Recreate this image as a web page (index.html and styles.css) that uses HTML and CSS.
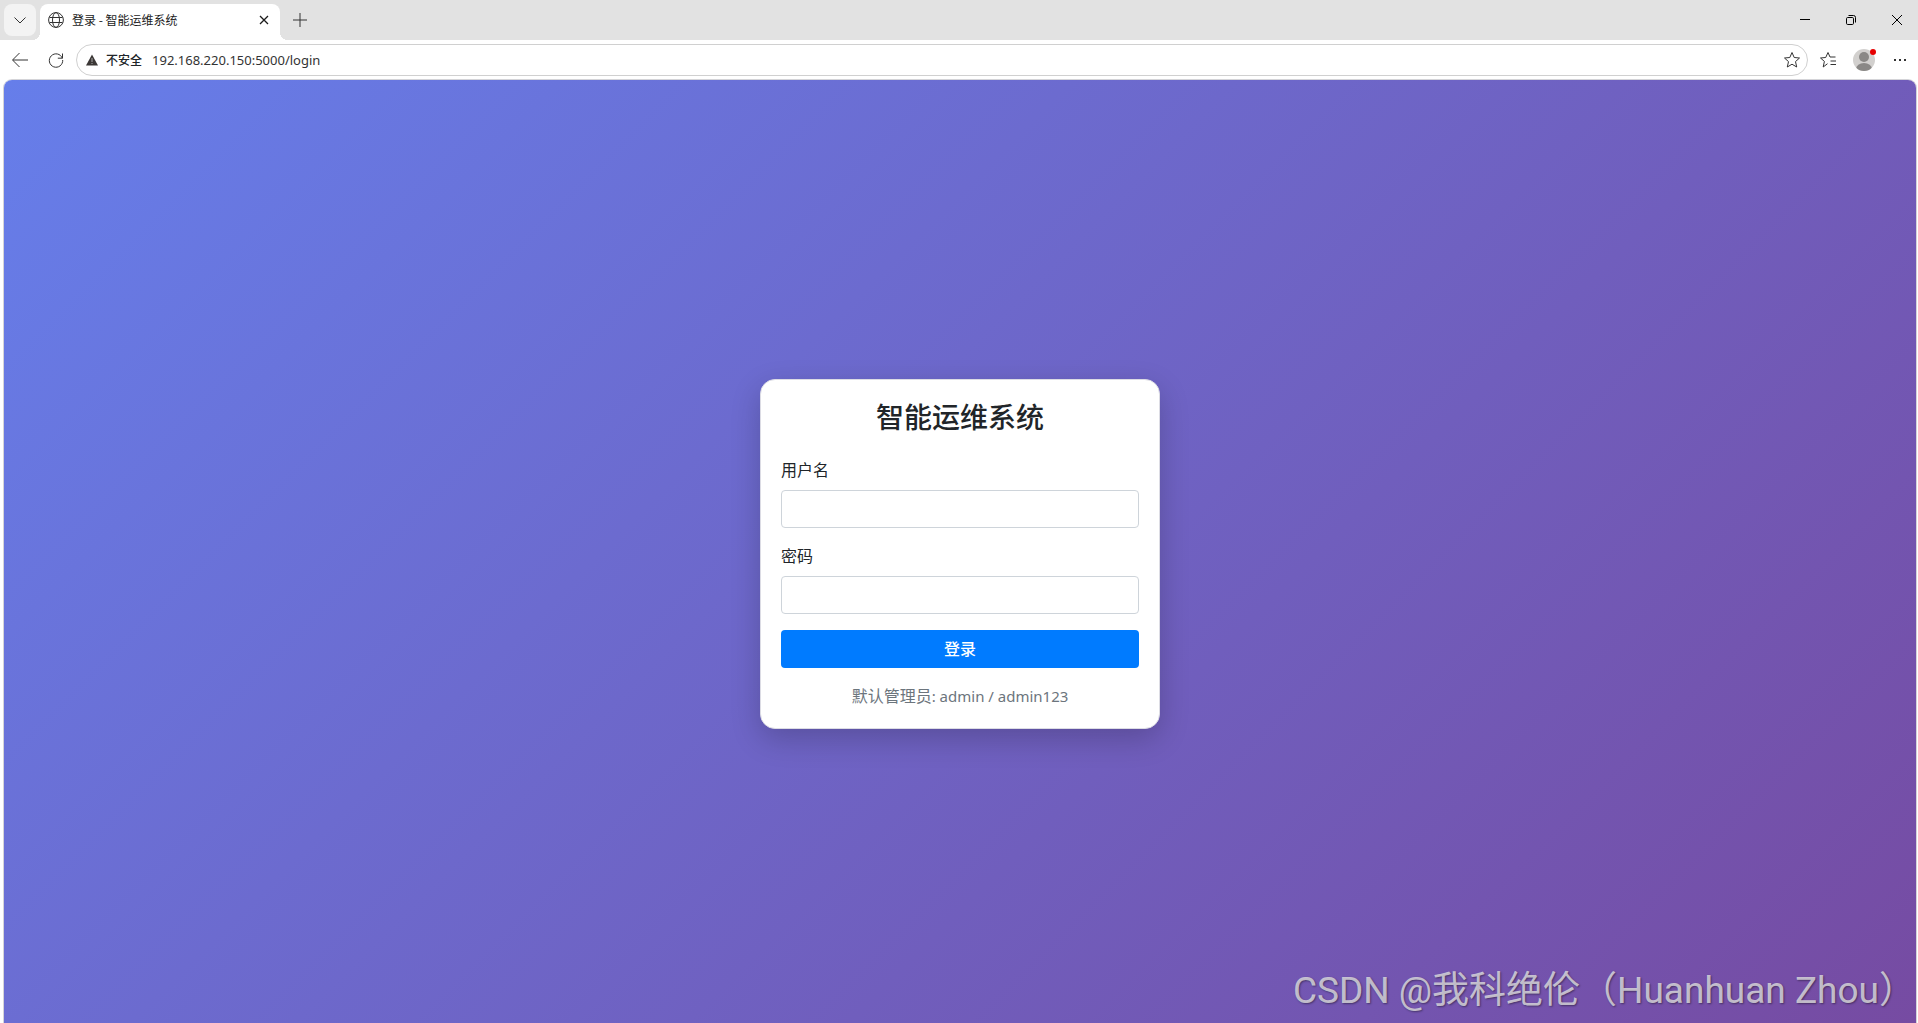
FILE: index.html
```html
<!DOCTYPE html>
<html lang="zh-CN">
<head>
<meta charset="utf-8">
<title>登录 - 智能运维系统</title>
<link rel="stylesheet" href="styles.css">
</head>
<body>
<div class="browser">
  <header class="tabbar">
    <button class="tab-menu" type="button" aria-label="标签页操作"><svg width="14" height="14" viewBox="0 0 14 14"><path d="M1.500 4.500l5.500 5.500 5.500-5.500"/></svg></button>
    <div class="tab">
      <svg class="globe" width="16" height="16" viewBox="0 0 16 16"><circle cx="8" cy="8" r="7.400"/><ellipse cx="8" cy="8" rx="3.500" ry="7.400"/><path d="M1.500 5.500h13M1.500 10.500h13"/></svg>
      <span class="tab-title">登录 - 智能运维系统</span>
      <button class="tab-close" type="button" aria-label="关闭标签页"><svg width="10" height="10" viewBox="0 0 10 10"><path d="M1 1l8 8M9 1l-8 8"/></svg></button>
    </div>
    <button class="new-tab" type="button" aria-label="新建标签页"><svg width="16" height="16" viewBox="0 0 16 16"><path d="M8 1v14M1 8h14"/></svg></button>
    <div class="window-buttons">
      <button type="button" aria-label="最小化"><svg width="12" height="12" viewBox="0 0 12 12"><path d="M1 5.500h10"/></svg></button>
      <button type="button" aria-label="还原"><svg width="12" height="12" viewBox="0 0 12 12"><rect x="1.500" y="3.500" width="7" height="7" rx="1.200"/><path d="M3.500 1.500h5a2 2 0 0 1 2 2v5"/></svg></button>
      <button type="button" aria-label="关闭"><svg width="12" height="12" viewBox="0 0 12 12"><path d="M1 1l10 10M11 1L1 11"/></svg></button>
    </div>
  </header>
  <nav class="toolbar" aria-label="导航">
    <button class="tool" type="button" aria-label="后退"><svg width="18" height="16" viewBox="0 0 18 16"><path d="M17 8H2M8.500 1L1.500 8l7 7"/></svg></button>
    <button class="tool" type="button" aria-label="刷新"><svg width="16" height="16" viewBox="0 0 16 16"><path d="M14.300 6.200A6.700 6.700 0 1 0 14.700 8M14.500 1.500v4.700H9.800"/></svg></button>
    <div class="address">
      <svg class="warning" width="14" height="14" viewBox="0 0 14 14"><path class="solid" d="M7 1.500L13 12.500H1z"/><path class="mark" d="M7 5v4M7 10v1"/></svg>
      <span class="insecure">不安全</span>
      <input class="url" type="text" aria-label="地址" value="192.168.220.150:5000/login">
      <button class="star" type="button" aria-label="收藏"><svg width="18" height="18" viewBox="0 0 18 18"><path d="M9 1.500l2.200 5 5.300.500-4 3.600 1.200 5.400L9 13.200 4.300 16l1.200-5.400-4-3.600 5.300-.500z"/></svg></button>
    </div>
    <div class="actions">
      <button class="tool" type="button" aria-label="收藏夹"><svg width="18" height="18" viewBox="0 0 18 18"><path d="M8.500 12.700L4.200 16l1.200-5.600L1.500 7l5.200-.500 2.300-5 2 4.500h5.500M11.500 10h5.500M11.500 13.500h5.500"/></svg></button>
      <button class="tool profile" type="button" aria-label="个人资料"><svg width="24" height="24" viewBox="0 0 24 24"><defs><clipPath id="disc"><circle cx="12" cy="12" r="11"/></clipPath></defs><circle cx="12" cy="12" r="11" fill="#d2d0ce"/><g clip-path="url(#disc)" fill="#8a8886"><circle cx="12" cy="9" r="5"/><ellipse cx="12" cy="21" rx="8" ry="6"/></g><circle cx="21" cy="4" r="3" fill="#e60000"/></svg></button>
      <button class="tool" type="button" aria-label="更多"><svg width="14" height="4" viewBox="0 0 14 4"><path class="solid" d="M1 1h2v2H1zM6 1h2v2H6zM11 1h2v2h-2z"/></svg></button>
    </div>
  </nav>
  <main class="page">
    <form class="card">
      <h1 class="title">智能运维系统</h1>
      <div class="field">
        <label for="username">用户名</label>
        <input id="username" type="text">
      </div>
      <div class="field">
        <label for="password">密码</label>
        <input id="password" type="password">
      </div>
      <button class="submit" type="button">登录</button>
      <p class="hint">默认管理员<span class="account">: admin / admin123</span></p>
    </form>
    <div class="watermark">CSDN @我科绝伦（Huanhuan Zhou）</div>
  </main>
</div>
</body>
</html>
```
FILE: styles.css
```css
* {
  box-sizing: border-box;
}

body {
  margin: 0;
  font-family: "Noto Sans", "Noto Sans CJK SC", sans-serif;
  color: #212529;
}

button {
  border: 0;
  padding: 0;
  background: transparent;
  font: inherit;
}

svg {
  display: block;
  fill: none;
  stroke: #333;
  stroke-width: 1;
}

.solid {
  fill: #333;
  stroke: none;
}

.browser {
  display: flex;
  flex-direction: column;
  height: 100vh;
  overflow: hidden;
  background: #fff;
}

.tabbar {
  display: flex;
  align-items: center;
  height: 40px;
  padding-left: 4px;
  background: #e2e2e2;
}

.tab-menu {
  display: grid;
  place-items: center;
  width: 32px;
  height: 32px;
  border-radius: 8px;
  background: #f3f3f3;
}

.tab {
  position: relative;
  display: flex;
  align-items: center;
  align-self: flex-end;
  gap: 8px;
  width: 240px;
  height: 36px;
  margin-left: 4px;
  padding: 0 11px 4px 8px;
  border-radius: 8px 8px 0 0;
  background: #fff;
}

.tab::before,
.tab::after {
  content: "";
  position: absolute;
  bottom: 0;
  width: 8px;
  height: 8px;
}

.tab::before {
  right: 100%;
  background: radial-gradient(circle at 0 0, transparent 8px, #fff 8px);
}

.tab::after {
  left: 100%;
  background: radial-gradient(circle at 100% 0, transparent 8px, #fff 8px);
}

.tab-title {
  flex: 1;
  font-family: "Noto Sans CJK SC", sans-serif;
  font-size: 12px;
  line-height: 16px;
  color: #1b1b1b;
}

.tab-close svg {
  stroke: #1b1b1b;
  stroke-width: 1.3;
}

.new-tab {
  display: grid;
  place-items: center;
  width: 32px;
  height: 32px;
  margin-left: 4px;
}

.window-buttons {
  display: flex;
  margin-right: -2px;
  margin-left: auto;
}

.window-buttons button {
  display: grid;
  place-items: center;
  width: 46px;
  height: 40px;
}

.window-buttons svg {
  stroke: #000;
}

.toolbar {
  display: flex;
  align-items: center;
  height: 40px;
  padding: 0 0 0 2px;
}

.tool {
  display: grid;
  place-items: center;
  width: 36px;
  height: 32px;
}

.address {
  display: flex;
  flex: 1;
  align-items: center;
  height: 32px;
  margin-left: 2px;
  padding: 0 6px 0 8px;
  border: 1px solid #d0d0d0;
  border-radius: 16px;
}

.warning .solid {
  fill: #3b3735;
}

.warning .mark {
  stroke: #aaa;
}

.insecure {
  margin: 0 8px 0 7px;
  font-family: "Noto Sans CJK SC", sans-serif;
  font-size: 12px;
  font-weight: 500;
  line-height: 16px;
}

.url {
  flex: 1;
  min-width: 0;
  padding: 0 2px;
  border: 0;
  background: transparent;
  font-family: "Noto Sans", sans-serif;
  font-size: 13px;
  color: #333;
}

.actions {
  display: flex;
  align-items: center;
  margin-left: 2px;
}

.profile svg {
  stroke: none;
}

.page {
  position: relative;
  display: flex;
  flex: 1;
  align-items: center;
  justify-content: center;
  margin: 0 2px 0 4px;
  padding-top: 5px;
  border-radius: 8px 8px 0 0;
  background: linear-gradient(135deg, #667eea 0%, #764ba2 100%);
  box-shadow: 0 0 0 1px #d4d4d8;
}

.card {
  width: 400px;
  padding: 20px;
  border: 1px solid #dcdce4;
  border-radius: 15px;
  background: #fff;
  box-shadow: 0 10px 30px rgba(0, 0, 0, 0.2);
  line-height: 24px;
}

.title {
  margin: 0 0 24px;
  font-size: 28px;
  font-weight: 500;
  line-height: 34px;
  text-align: center;
}

.field {
  margin-bottom: 16px;
}

.field label {
  display: block;
  margin-bottom: 8px;
}

.field input {
  display: block;
  width: 100%;
  height: 38px;
  padding: 6px 12px;
  border: 1px solid #ced4da;
  border-radius: 4px;
  font: inherit;
}

.submit {
  display: block;
  width: 100%;
  height: 38px;
  border-radius: 4px;
  background: #007bff;
  color: #fff;
  font-weight: 500;
}

.hint {
  margin: 16px 0 0;
  color: #6c757d;
  text-align: center;
}

.account {
  font-size: 15px;
}

.watermark {
  position: absolute;
  right: 0;
  bottom: 8px;
  font-family: Roboto, "Noto Sans CJK SC", sans-serif;
  font-size: 37px;
  font-weight: 400;
  line-height: 48px;
  white-space: nowrap;
  color: rgba(225, 225, 225, 0.8);
  text-shadow: 1px 1px 2px rgba(0, 0, 0, 0.4);
}
```
